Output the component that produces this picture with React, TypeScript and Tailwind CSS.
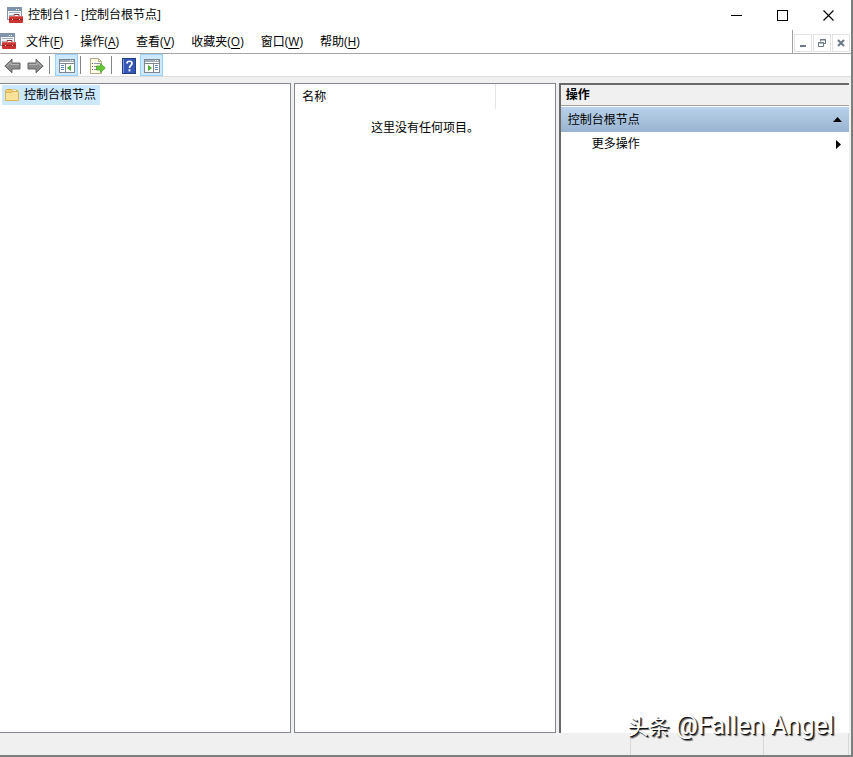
import type { ReactNode } from "react";

function ConsoleIcon() {
  return (
    <svg width="17" height="17" viewBox="0 0 17 17" aria-hidden="true">
      <rect x="0.5" y="0.5" width="14" height="12" fill="#f4f6f9" stroke="#8494a8" />
      <rect x="1" y="1" width="13" height="3" fill="#7f93ad" />
      <path d="M9 2.5h1M11 2.5h1" stroke="#fff" />
      <path d="M2 5.5h11M2 8.5h4M2 10.5h3" stroke="#9fb0c4" />
      <path d="M7 9.500V7.500h5v2" fill="none" stroke="#8a3a3a" />
      <rect x="2" y="9" width="14" height="7" rx="1" fill="#cb3431" />
      <path d="M2 12.500h14" stroke="#a31f20" />
      <path d="M3 9.500h12" stroke="#e06462" />
      <path d="M5.500 12v1M12.500 12v1" stroke="#f6dcdc" />
    </svg>
  );
}

function Arrow({ flip = false }: { flip?: boolean }) {
  return (
    <svg width="17" height="16" viewBox="0 0 17 16" className={flip ? "-scale-x-100" : ""} aria-hidden="true">
      <path d="M0.8 8 8 1.2V5h8v6H8v3.8Z" fill="#8c8c8c" stroke="#666" />
      <path d="M3 8 7 4.2V6.500h8" fill="none" stroke="#b5b5b5" />
    </svg>
  );
}

function PaneIcon({ right = false }: { right?: boolean }) {
  return (
    <svg width="16" height="14" viewBox="0 0 16 14" aria-hidden="true">
      <rect x="0.5" y="0.5" width="15" height="13" fill="#fff" stroke="#7d8792" />
      <rect x="1" y="1" width="14" height="2" fill="#a4adb8" />
      <path d="M11 1.500h1M13 1.500h1" stroke="#fff" />
      <path d="M1 4.500h14" stroke="#7d8792" />
      {right ? (
        <>
          <path d="M9.500 5v8" stroke="#7d8792" />
          <path d="M11 6.500h3M11 8.500h3M11 10.500h3" stroke="#6685b5" />
          <path d="m4 6 4 3-4 3Z" fill="#4cae32" />
        </>
      ) : (
        <>
          <path d="M6.500 5v8" stroke="#7d8792" />
          <path d="M2 6.500h3M2 8.500h3M2 10.500h3" stroke="#6685b5" />
          <path d="m12 6-4 3 4 3Z" fill="#4cae32" />
        </>
      )}
    </svg>
  );
}

function ExportIcon() {
  return (
    <svg width="17" height="16" viewBox="0 0 17 16" aria-hidden="true">
      <path d="M1.500.500h8l3 3v12h-11Z" fill="#fffbe8" stroke="#b3ab8d" />
      <path d="M9.500.500v3h3" fill="none" stroke="#b3ab8d" />
      <path d="M3 5.500h1M3 8.500h1M3 11.500h1" stroke="#555" />
      <path d="M5 5.500h6M5 8.500h3M5 11.500h3" stroke="#8b93b8" />
      <path d="M7.500 8h4V5.500L16.300 10l-4.800 4.500V12h-4Z" fill="#63c637" stroke="#3f9b22" strokeWidth=".7" />
    </svg>
  );
}

function HelpIcon() {
  return (
    <svg width="14" height="16" viewBox="0 0 14 16" aria-hidden="true">
      <rect x=".5" y=".5" width="13" height="15" fill="#3558b8" stroke="#24407f" />
      <path d="M1.500 1v14" stroke="#7e9be0" />
      <path d="M5 5.500c0-3 5-3 5 0 0 2-2.500 2-2.500 4.500" fill="none" stroke="#fff" strokeWidth="1.700" />
      <rect x="6.500" y="11.300" width="2" height="2" fill="#fff" />
    </svg>
  );
}

function FolderIcon() {
  return (
    <svg width="16" height="14" viewBox="0 0 16 14" aria-hidden="true">
      <path d="M1.500 12.500v-10l1-1h5l1 1h5v10Z" fill="#f0cd72" stroke="#d6ad4a" />
      <path d="M9 1.500h3v2H9Z" fill="#fff" stroke="#c9b06c" strokeWidth=".6" />
      <path d="M1.500 12.500v-8h6l1-1h6v9Z" fill="#fbe29a" stroke="#dcb557" />
    </svg>
  );
}

function ToolButton({ label, active = false, children }: { label: string; active?: boolean; children: ReactNode }) {
  return (
    <button
      type="button"
      aria-label={label}
      className={
        active
          ? "flex h-[22px] w-[23px] items-center justify-center border border-[#99d1ff] bg-[#cce8ff] pt-0.5"
          : "flex h-[22px] w-[23px] items-center justify-center pt-0.5"
      }
    >
      {children}
    </button>
  );
}

function Separator() {
  return <div className="mr-[5px] ml-[2px] h-[18px] w-px bg-[#858585]" />;
}

const menus = [
  ["文件", "F"],
  ["操作", "A"],
  ["查看", "V"],
  ["收藏夹", "O"],
  ["窗口", "W"],
  ["帮助", "H"],
];

export default function App() {
  return (
    <div className="relative flex h-screen flex-col overflow-hidden border-r-2 border-b-2 border-[#7b7f7d] bg-white font-['Open_Sans','Noto_Sans_CJK_SC',sans-serif] text-xs text-black">
      <header className="flex h-[30px] shrink-0 items-center pl-[7px]">
        <ConsoleIcon />
        <h1 className="ml-1 flex-1">控制台1 - [控制台根节点]</h1>
        <button type="button" aria-label="最小化" className="flex h-7 w-[46px] items-center justify-center">
          <svg width="11" height="11" viewBox="0 0 11 11"><path d="M0 5.500h11" stroke="#000" /></svg>
        </button>
        <button type="button" aria-label="最大化" className="flex h-7 w-[46px] items-center justify-center">
          <svg width="11" height="11" viewBox="0 0 11 11"><rect x=".5" y=".5" width="10" height="10" fill="none" stroke="#000" /></svg>
        </button>
        <button type="button" aria-label="关闭" className="flex h-7 w-[46px] items-center justify-center">
          <svg width="11" height="11" viewBox="0 0 11 11"><path d="m.5.500 10 10m0-10-10 10" stroke="#000" strokeWidth="1.100" /></svg>
        </button>
      </header>

      <nav className="flex h-6 shrink-0 border-b border-[#a5a5a5]">
        <div className="flex flex-1 items-center gap-px">
          <ConsoleIcon />
          {menus.map(([name, key]) => (
            <button key={key} type="button" className="h-full px-2 whitespace-nowrap">
              {name}(<span className="underline underline-offset-2">{key}</span>)
            </button>
          ))}
        </div>
        <div className="flex items-center gap-px border-l border-[#a0a0a0] px-px pt-0.5">
          <button type="button" aria-label="最小化子窗口" className="flex h-[18px] w-[18px] items-center justify-center border border-[#e3e3e3]">
            <svg width="10" height="10" viewBox="0 0 10 10"><path d="M2 8h6" stroke="#6b7885" strokeWidth="2" /></svg>
          </button>
          <button type="button" aria-label="还原子窗口" className="flex h-[18px] w-[18px] items-center justify-center border border-[#e3e3e3]">
            <svg width="10" height="10" viewBox="0 0 10 10" fill="none" stroke="#6b7885">
              <path d="M3.500 3.500v-2h5v4h-2M3 2h6M1.500 4.500h5v4h-5ZM1 5h6" />
            </svg>
          </button>
          <button type="button" aria-label="关闭子窗口" className="flex h-[18px] w-[18px] items-center justify-center border border-[#e3e3e3]">
            <svg width="10" height="10" viewBox="0 0 10 10"><path d="m2 2 6 6m0-6-6 6" stroke="#6b7885" strokeWidth="2" /></svg>
          </button>
        </div>
      </nav>

      <div role="toolbar" aria-label="工具栏" className="flex h-[23px] shrink-0 items-center border-b border-[#dcdcdc] pl-px">
        <ToolButton label="后退"><Arrow /></ToolButton>
        <ToolButton label="前进"><Arrow flip /></ToolButton>
        <Separator />
        <ToolButton label="显示/隐藏控制台树" active><PaneIcon /></ToolButton>
        <Separator />
        <ToolButton label="导出列表"><ExportIcon /></ToolButton>
        <Separator />
        <ToolButton label="帮助"><HelpIcon /></ToolButton>
        <ToolButton label="显示/隐藏操作窗格" active><PaneIcon right /></ToolButton>
      </div>

      <main className="flex min-h-0 flex-1 bg-[#f0f0f0] pt-[6px] pr-[2px]">
        <section className="w-[34.300%] border-t border-r border-b border-[#828790] bg-white">
          <ul role="tree" className="pt-px pl-[2px]">
            <li role="treeitem" aria-selected="true" className="flex h-5 w-fit items-center gap-1 bg-[#cce8ff] pr-1 pl-[2px]">
              <FolderIcon />
              控制台根节点
            </li>
          </ul>
        </section>
        <section className="ml-[3px] flex-1 border border-[#828790] bg-white">
          <div className="flex h-[25px] items-center">
            <div className="flex h-full w-[201px] items-center border-r border-[#e5e5e5] pl-[7px]">名称</div>
          </div>
          <p className="pt-[11px] text-center leading-4">这里没有任何项目。</p>
        </section>
        <aside className="ml-[3px] w-[34.200%] border-t-2 border-l-2 border-[#696969] bg-white">
          <h2 className="flex h-[21px] items-center border-b border-[#a0a0a0] bg-[#f0f0f0] pl-[5px] font-bold">操作</h2>
          <button type="button" className="mt-px flex h-[25px] w-full items-center justify-between bg-linear-to-b from-[#b9d1ea] to-[#99b4d1] pr-[7px] pl-[7px]">
            控制台根节点
            <svg width="9" height="5" viewBox="0 0 9 5"><path d="M0 5 4.500 0 9 5Z" /></svg>
          </button>
          <button type="button" className="flex h-6 w-full items-center justify-between pr-2 pl-[31px]">
            更多操作
            <svg width="5" height="9" viewBox="0 0 5 9"><path d="m0 0 5 4.500L0 9Z" /></svg>
          </button>
        </aside>
      </main>

      <footer className="flex h-[22px] shrink-0 justify-end bg-[#f0f0f0] pr-[2px]">
        <div className="w-[133px] border-l border-[#d7d7d7]" />
        <div className="w-[86px] border-x border-[#d7d7d7]" />
      </footer>

      <p className="absolute right-[17px] bottom-3 font-[Roboto,'Noto_Sans_CJK_SC',sans-serif] text-[25px] leading-8 whitespace-nowrap text-white [text-shadow:1px_1px_0_#111,2px_2px_1px_#555]">
        <span className="text-[21px]">头条</span> @Fallen Angel
      </p>
    </div>
  );
}
